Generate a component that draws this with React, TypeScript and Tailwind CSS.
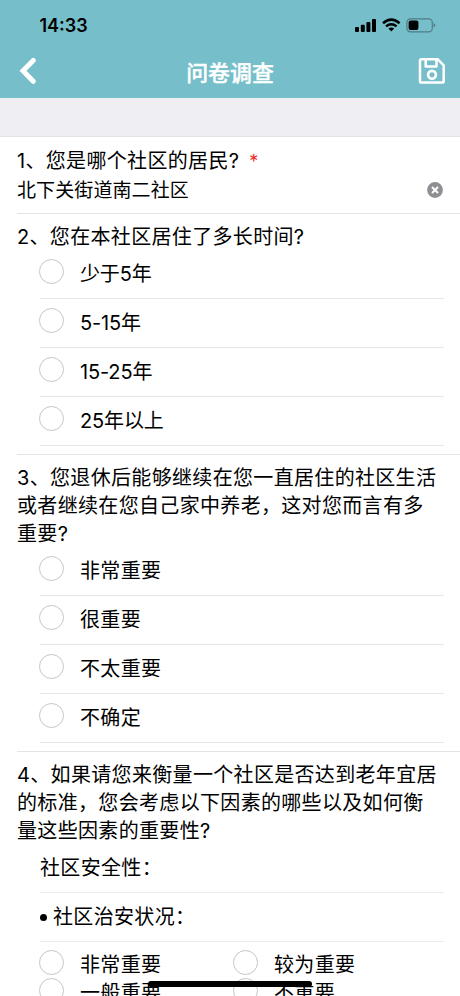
import type { ReactNode } from "react";

function StatusBar() {
  return (
    <div className="flex h-[50px] items-start justify-between pl-[39.5px] pr-[24px]">
      <span className="mt-[13px] text-[18px] font-semibold leading-[26px] text-black">14:33</span>
      <div className="mt-[18px] flex items-start">
        <svg className="h-[15px] w-[22px]" viewBox="0 0 22 15" fill="#000">
          <rect x="0" y="9" width="4" height="5" rx="1" />
          <rect x="5.8" y="6.7" width="4" height="7.3" rx="1" />
          <rect x="11.4" y="4" width="4" height="10" rx="1" />
          <rect x="17" y="1" width="4" height="13" rx="1" />
        </svg>
        <svg className="ml-[5px] h-[14px] w-[19px]" viewBox="0 0 19 14" fill="none" stroke="#000" strokeWidth="2.5">
          <path d="M1 5.2Q9.2-1.9 17.6 5.2" />
          <path d="M4 8.4Q9.3 4.1 14.6 8.4" />
          <path d="M6.4 10.6Q9.3 8.6 12.2 10.6L9.3 13.5Z" fill="#000" stroke="none" />
        </svg>
        <svg className="ml-[5px] h-[15px] w-[30px]" viewBox="0 0 30 15" fill="none">
          <rect x="0.9" y="0.8" width="25.4" height="13" rx="3.6" stroke="#4c7e86" strokeWidth="1.2" />
          <rect x="2.6" y="2.6" width="9.8" height="9.4" rx="2" fill="#000" />
          <path d="M27.7 5v4.6q1.6-.8 1.6-2.3T27.7 5Z" fill="#4c7e86" />
        </svg>
      </div>
    </div>
  );
}

function NavBar() {
  return (
    <div className="flex h-12 items-start justify-between pl-[18px] pr-[14px] text-white">
      <svg className="mt-[7px] h-7 w-7" viewBox="0 0 28 28" fill="none" stroke="currentColor" strokeWidth="5" strokeLinecap="round" strokeLinejoin="miter">
        <path d="M15.2 3.4 5 13.8 15.2 24.3" />
      </svg>
      <h1 className="-ml-1 mt-[8px] text-[21.9px] font-medium leading-[30px] [-webkit-text-stroke:0.4px_white]">问卷调查</h1>
      <svg className="mt-[7px] h-7 w-7" viewBox="0 0 28 28" fill="none" stroke="currentColor" strokeWidth="2.5" strokeLinejoin="round">
        <path d="M3 2.2H19.6L25.7 8.4V24Q25.7 25.6 24.1 25.6H3.6Q2 25.6 2 24V3.8Q2 2.2 3.6 2.2Z" />
        <path d="M7.7 2.4V9.4H18.5V2.4" />
        <circle cx="14" cy="17.7" r="3.9" strokeWidth="2.7" />
      </svg>
    </div>
  );
}

function Radio() {
  return <span className="mt-[9px] h-[25px] w-[25px] shrink-0 rounded-full border border-[#c6c6c6]" />;
}

function Option({ label, numeric = false }: { label: string; numeric?: boolean }) {
  return (
    <div className="ml-10 mr-4 flex h-[49px] items-start border-b border-[#e6e6e6]">
      <span className="-ml-px flex">
        <Radio />
      </span>
      <span className={numeric ? "ml-4 mt-[10px] leading-7 tracking-[-0.15px]" : "ml-4 mt-[10px] leading-7"}>{label}</span>
    </div>
  );
}

function Line({ children }: { children: ReactNode }) {
  return <div className="ml-10 mr-4 h-[49px] border-b border-[#ebebeb] pt-[10px] leading-7">{children}</div>;
}

function Question({ lines, children }: { lines: string[]; children: ReactNode }) {
  return (
    <section>
      <h2 className="-mb-px ml-[17px] pt-[9px]">
        {lines.map((line) => (
          <span key={line} className="block whitespace-nowrap leading-7">
            {line}
          </span>
        ))}
      </h2>
      {children}
    </section>
  );
}

function Divider() {
  return <div className="ml-[17px] mt-2 h-px bg-[#e4e4e4]" />;
}

const ratings = ["非常重要", "较为重要", "一般重要", "不重要"];

export default function App() {
  return (
    <div className="relative h-[996px] w-[460px] overflow-hidden bg-white font-['Inter','Noto_Sans_CJK_SC',sans-serif] text-[20px] tracking-[0.33px] text-black">
      <header className="h-[98px] bg-[#76bfca] tracking-normal">
        <StatusBar />
        <NavBar />
      </header>
      <div className="h-[39px] border-b border-[#e4e4e6] bg-[#efeef3]" />

      <section className="flex h-[76px] flex-col pl-[17px] pt-[10px]">
        <h2 className="leading-7">
          1、您是哪个社区的居民?<span className="ml-[10px] text-[18px] text-[#f02b25]">*</span>
        </h2>
        <div className="-mt-px flex items-center justify-between pr-[17px] text-[19px] leading-[30px] tracking-[0.1px]">
          <span className="relative top-px">北下关街道南二社区</span>
          <svg className="-mt-px h-4 w-4" viewBox="0 0 16 16">
            <circle cx="8" cy="8" r="7.9" fill="#8e8e93" />
            <path d="m5 5 6 6m0-6-6 6" stroke="#fff" strokeWidth="2" />
          </svg>
        </div>
      </section>
      <div className="ml-[17px] h-px bg-[#e4e4e4]" />

      <Question lines={["2、您在本社区居住了多长时间?"]}>
        <Option label="少于5年" numeric />
        <Option label="5-15年" numeric />
        <Option label="15-25年" numeric />
        <Option label="25年以上" numeric />
      </Question>
      <Divider />

      <Question lines={["3、您退休后能够继续在您一直居住的社区生活", "或者继续在您自己家中养老，这对您而言有多", "重要?"]}>
        <Option label="非常重要" />
        <Option label="很重要" />
        <Option label="不太重要" />
        <Option label="不确定" />
      </Question>
      <Divider />

      <Question lines={["4、如果请您来衡量一个社区是否达到老年宜居", "的标准，您会考虑以下因素的哪些以及如何衡", "量这些因素的重要性?"]}>
        <Line>社区安全性：</Line>
        <Line>
          <span className="flex items-center">
            <span className="mr-[6px] h-[7px] w-[7px] rounded-full bg-black" />
            社区治安状况：
          </span>
        </Line>
        <div className="-mt-px ml-[39px] grid grid-cols-[194px_1fr]">
          {ratings.map((rating) => (
            <div key={rating} className="flex h-7 items-start">
              <Radio />
              <span className="ml-4 mt-[10px] leading-7">{rating}</span>
            </div>
          ))}
        </div>
      </Question>

      <div className="absolute left-[148px] top-[981px] h-[6px] w-[164px] rounded-full bg-black" />
    </div>
  );
}
